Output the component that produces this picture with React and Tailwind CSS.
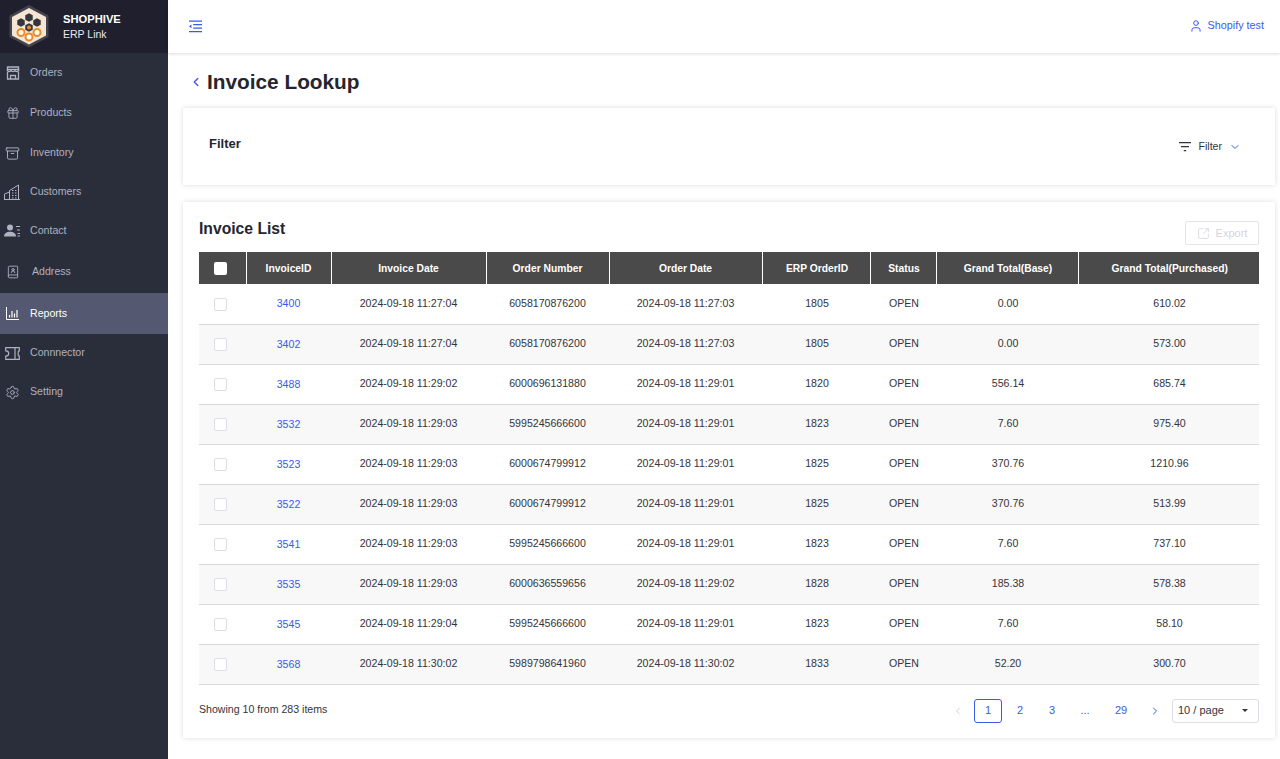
import { ChevronLeft, ChevronRight, ChevronDown, Gift, Archive, BookUser, Settings, User, SquareArrowOutUpRight } from 'lucide-react';

const font = "font-['Liberation_Sans',Arial,sans-serif]";

// pointy top hexagon, used for the honeycomb in the logo
const hex = (cx, cy, r) =>
  [[0, -1], [0.87, -0.5], [0.87, 0.5], [0, 1], [-0.87, 0.5], [-0.87, -0.5]]
    .map(([x, y]) => `${cx + x * r},${cy + y * r}`)
    .join(' ');

function Logo() {
  const cells = [[29, 16.500], [21, 21.500], [37, 21.500], [29, 26.500]];
  const rings = [[21, 31.500], [29, 36], [37, 31.500]];
  return (
    <svg width="48" height="46" viewBox="5 3 48 46" className="shrink-0">
      <polygon points="29,4 48.500,14.500 48.500,36 29,46.500 9.500,36 9.500,14.500" fill="#44444c" />
      <polygon points="29,7 46,16 46,34.500 29,43.500 12,34.500 12,16" fill="#f4e6d2" />
      {cells.map(([x, y]) => (
        <polygon key={`${x}-${y}`} points={hex(x, y, 4.300)} fill="#34353d" />
      ))}
      <circle cx="29" cy="26.500" r="2" fill="#f08a24" />
      {rings.map(([x, y]) => (
        <circle key={`${x}-${y}`} cx={x} cy={y} r="3.500" fill="#fff" stroke="#f08a24" strokeWidth="2" />
      ))}
    </svg>
  );
}

const StoreIcon = () => (
  <svg width="14" height="14" viewBox="0 0 14 14" fill="none" stroke="currentColor" strokeWidth="1.300">
    <path d="M1.500 6v7h11V6" />
    <path d="M1.500 1h11v2.500h-11zM1 3.500c0 2.500 3 2.500 4 1 1 1.500 3 1.500 4 0 1 1.500 4 1.500 4-1" />
    <path d="M4.500 13V9.500h5V13" />
  </svg>
);

const BuildingIcon = () => (
  <svg width="16" height="16" viewBox="0 0 16 16" fill="none" stroke="currentColor" strokeWidth="1">
    <path d="M0.500 15.500V10l5-2v7.500M5.500 15.500V6.500l9-5.500v14.500zM0 15.500h16" />
    <path d="M8 6.500h1.500M11 6.500h1.500M8 9h1.500M11 9h1.500M8 11.500h1.500M11 11.500h1.500M8 14h1.500M11 14h1.500" />
  </svg>
);

const ContactIcon = () => (
  <svg width="16" height="14" viewBox="0 0 16 14" fill="currentColor">
    <circle cx="6" cy="3.500" r="3" />
    <path d="M0 12.500c0-3 2.500-4.800 6-4.800s6 1.800 6 4.800z" />
    <path d="M12 2h4v1h-4zM13 5.500h3v1h-3zM13.500 9h2.500v1h-2.500zM13.500 11.500h2.500v1h-2.500z" />
  </svg>
);

const ReportsIcon = () => (
  <svg width="13" height="13" viewBox="0 0 13 13" fill="none" stroke="currentColor" strokeWidth="1">
    <path d="M0.500 0v12.500H13" />
    <path d="M3.500 10.500V8M6 10.500V4M8.500 10.500V6.500M11 10.500V3" strokeWidth="1.200" />
  </svg>
);

const ConnectorIcon = () => (
  <svg width="15" height="13" viewBox="0 0 15 13" fill="none" stroke="currentColor" strokeWidth="1.200">
    <path d="M0.700 0.700h13.600v3.200c-1.600 0-1.600 5.200 0 5.200v3.200H0.700V9.100c2 0 3-1.500 3-2.600S2.700 3.900 0.700 3.900z" />
    <path d="M10 0.700v11.600" />
  </svg>
);

const FilterIcon = () => (
  <svg width="12" height="10" viewBox="0 0 12 10" fill="#33343c">
    <path d="M0 0h12v1.200H0zM2 4h8v1.200H2zM4.800 8h2.400v1.200H4.800z" />
  </svg>
);

const menu = [
  { label: 'Orders', h: 'h-[40px]', w: 'w-[30px] pl-[6px]', icon: <StoreIcon /> },
  { label: 'Products', h: 'h-[40px]', w: 'w-[30px] pl-[6px]', icon: <Gift size={14} strokeWidth={1.5} /> },
  { label: 'Inventory', h: 'h-[40px]', w: 'w-[30px] pl-[5px]', icon: <Archive size={15} strokeWidth={1.5} /> },
  { label: 'Customers', h: 'h-[38px]', w: 'w-[30px] pl-[4px]', icon: <BuildingIcon /> },
  { label: 'Contact', h: 'h-[40px]', w: 'w-[30px] pl-[4px]', icon: <ContactIcon /> },
  { label: 'Address', h: 'h-[42px]', w: 'w-[32px] pl-[6px]', icon: <BookUser size={14} strokeWidth={1.5} /> },
  { label: 'Reports', h: 'h-[41px]', w: 'w-[30px] pl-[6px]', icon: <ReportsIcon />, active: true },
  { label: 'Connnector', h: 'h-[38px]', w: 'w-[30px] pl-[5px]', icon: <ConnectorIcon /> },
  { label: 'Setting', h: 'h-[40px]', w: 'w-[30px] pl-[5px]', icon: <Settings size={15} strokeWidth={1.5} /> },
];

const columns = [
  ['InvoiceID', 'w-[85px]'],
  ['Invoice Date', 'w-[155px]'],
  ['Order Number', 'w-[123px]'],
  ['Order Date', 'w-[153px]'],
  ['ERP OrderID', 'w-[108px] pl-[2px]'],
  ['Status', 'w-[66px] pl-[2px]'],
  ['Grand Total(Base)', 'w-[142px] pl-[2px]'],
  ['Grand Total(Purchased)', 'pl-[2px]'],
];

const rows = [
  ['3400', '2024-09-18 11:27:04', '6058170876200', '2024-09-18 11:27:03', '1805', '0.00', '610.02'],
  ['3402', '2024-09-18 11:27:04', '6058170876200', '2024-09-18 11:27:03', '1805', '0.00', '573.00'],
  ['3488', '2024-09-18 11:29:02', '6000696131880', '2024-09-18 11:29:01', '1820', '556.14', '685.74'],
  ['3532', '2024-09-18 11:29:03', '5995245666600', '2024-09-18 11:29:01', '1823', '7.60', '975.40'],
  ['3523', '2024-09-18 11:29:03', '6000674799912', '2024-09-18 11:29:01', '1825', '370.76', '1210.96'],
  ['3522', '2024-09-18 11:29:03', '6000674799912', '2024-09-18 11:29:01', '1825', '370.76', '513.99'],
  ['3541', '2024-09-18 11:29:03', '5995245666600', '2024-09-18 11:29:01', '1823', '7.60', '737.10'],
  ['3535', '2024-09-18 11:29:03', '6000636559656', '2024-09-18 11:29:02', '1828', '185.38', '578.38'],
  ['3545', '2024-09-18 11:29:04', '5995245666600', '2024-09-18 11:29:01', '1823', '7.60', '58.10'],
  ['3568', '2024-09-18 11:30:02', '5989798641960', '2024-09-18 11:30:02', '1833', '52.20', '300.70'],
];

function Sidebar() {
  return (
    <aside className="w-[168px] shrink-0 bg-[#2a2d3a] min-h-[759px]">
      <div className="h-[53px] bg-[#1f1f2d] flex items-center pl-[5px]">
        <Logo />
        <div className="ml-[10px] text-white leading-[15px]">
          <div className="font-bold text-[11.200px]">SHOPHIVE</div>
          <div className="text-[10.500px] text-[#e8e8ee]">ERP Link</div>
        </div>
      </div>
      {menu.map((m) => (
        <div
          key={m.label}
          className={`flex items-center text-[10.600px] ${m.h} ${m.active ? 'bg-[#545971] text-white' : 'text-[#aeb2c2]'}`}
        >
          <span className={`shrink-0 ${m.w}`}>{m.icon}</span>
          {m.label}
        </div>
      ))}
    </aside>
  );
}

function Topbar() {
  return (
    <div className="h-[53px] bg-white shadow-[0_1px_3px_rgba(0,0,0,0.14)] flex items-center justify-between pl-[21px] pr-[16px]">
      <svg width="13" height="13" viewBox="0 0 14 13" fill="#3a5be8">
        <path d="M0 0h14v1.300H0zM4.500 3.800H14v1.300H4.500zM4.500 7.600H14v1.300H4.500zM0 11.400h14v1.300H0zM2.600 4.300v4L0 6.300z" />
      </svg>
      <div className="flex items-center text-[#3a5be8] text-[10.800px] gap-[5px] pb-[2px]">
        <User size={14} strokeWidth={1.7} />
        Shopify test
      </div>
    </div>
  );
}

function Checkbox({ header }) {
  return (
    <span
      className={`inline-block align-middle w-[13px] h-[13px] rounded-[2px] ${header ? 'bg-white' : 'bg-white border border-[#dcdde6]'}`}
    />
  );
}

function InvoiceTable() {
  return (
    <table className="w-[1060px] table-fixed border-collapse text-[10.600px] text-[#33343c]">
      <thead>
        <tr className="h-[32px] bg-[#4a4a4a] text-white text-[10.300px]">
          <th className="w-[47px] font-normal pr-[3px]">
            <Checkbox header />
          </th>
          {columns.map(([name, w]) => (
            <th key={name} className={`${w} pt-[1px] font-bold border-l border-white`}>
              {name}
            </th>
          ))}
        </tr>
      </thead>
      <tbody>
        {rows.map((r, i) => (
          <tr key={r[0]} className={`h-[40px] border-b border-[#d8d9e6] text-center ${i % 2 ? 'bg-[#f8f8f8]' : 'bg-white'}`}>
            <td className="pr-[4px]">
              <Checkbox />
            </td>
            <td className="text-[#3a5be8] pt-[1px]">{r[0]}</td>
            <td>{r[1]}</td>
            <td>{r[2]}</td>
            <td>{r[3]}</td>
            <td className="pl-[2px]">{r[4]}</td>
            <td className="pl-[2px]">OPEN</td>
            <td className="pl-[2px]">{r[5]}</td>
            <td className="pl-[2px]">{r[6]}</td>
          </tr>
        ))}
      </tbody>
    </table>
  );
}

function Pagination() {
  return (
    <div className="flex items-center text-[11px] text-[#3a5be8]">
      <ChevronLeft size={12} strokeWidth={2} className="text-[#cfd2de] mr-[10px]" />
      <span className="w-[28px] h-[24px] flex items-center justify-center border border-[#3a5be8] rounded-[3px]">1</span>
      <span className="w-[36px] text-center">2</span>
      <span className="w-[28px] text-center">3</span>
      <span className="w-[38px] text-center">...</span>
      <span className="w-[34px] text-center">29</span>
      <ChevronRight size={12} strokeWidth={2} className="ml-[11px] mr-[11px]" />
      <div className="w-[87px] h-[24px] border border-[#dcdde6] rounded-[3px] flex items-center justify-between pl-[5px] pr-[10px] text-[#33343c]">
        10 / page
        <span className="w-0 h-0 border-x-[3px] border-x-transparent border-t-[3px] border-t-[#33343c]" />
      </div>
    </div>
  );
}

export default function App() {
  return (
    <div className={`flex bg-white ${font}`}>
      <Sidebar />
      <main className="flex-1 min-w-0">
        <Topbar />
        <div className="flex items-center h-[55px] pt-[2px] pl-[21px] text-[#24252f]">
          <ChevronLeft size={14} strokeWidth={2.4} className="text-[#3a5be8] mr-[4px]" />
          <h1 className="text-[20.800px] font-bold">Invoice Lookup</h1>
        </div>
        <section className="ml-[15px] mr-[5px] h-[77px] bg-white shadow-[0_0_5px_rgba(0,0,0,0.14)] flex justify-between pl-[26px] pr-[34px] text-[#33343c]">
          <div className="text-[13px] font-bold text-[#24252f] pt-[26px]">Filter</div>
          <div className="flex items-center gap-[7px] text-[10.600px]">
            <FilterIcon />
            Filter
            <ChevronDown size={12} strokeWidth={2} className="text-[#3a5be8]" />
          </div>
        </section>
        <section className="ml-[15px] mr-[5px] mt-[17px] h-[536px] bg-white shadow-[0_0_5px_rgba(0,0,0,0.14)] px-[16px]">
          <div className="h-[50px] flex items-start justify-between">
            <h2 className="text-[15.700px] font-bold text-[#24252f] pt-[15px]">Invoice List</h2>
            <div className="mt-[19px] w-[74px] h-[24px] border border-[#e2e3ee] rounded-[2px] flex items-center justify-center gap-[6px] text-[11px] text-[#d3d5e0]">
              <SquareArrowOutUpRight size={13} strokeWidth={1.5} />
              Export
            </div>
          </div>
          <InvoiceTable />
          <div className="flex items-center justify-between h-[52px] text-[10.600px] text-[#33343c]">
            <span className="pb-[2px]">Showing 10 from 283 items</span>
            <Pagination />
          </div>
        </section>
      </main>
    </div>
  );
}
